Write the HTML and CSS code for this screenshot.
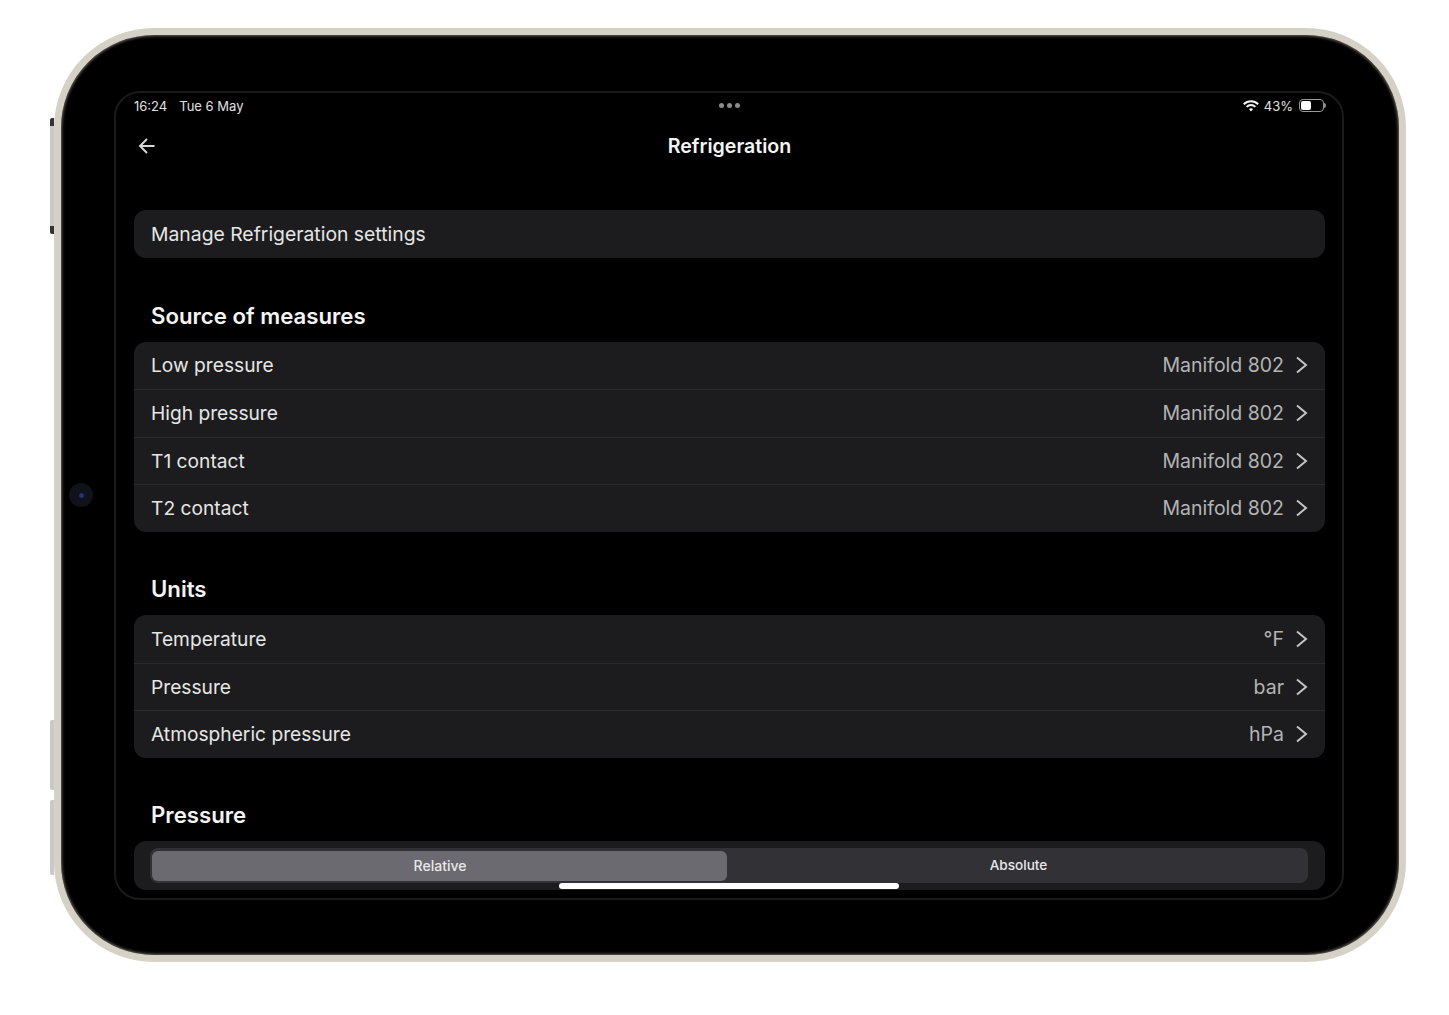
FILE: index.html
```html
<!DOCTYPE html>
<html>

<head>
    <title>Refrigeration</title>
    <meta charset="utf-8">
    <link rel="stylesheet" href="styles.css">
</head>

<body>
    <div class="device">
        <span class="side-btn side-top"></span>
        <span class="side-btn side-mid"></span>
        <span class="side-btn side-low"></span>
        <span class="camera"><i></i></span>

        <div class="screen">
            <div class="status">
                <div class="status-left"><span>16:24</span><span>Tue 6 May</span></div>
                <div class="dots"><i></i><i></i><i></i></div>
                <div class="status-right">
                    <svg class="wifi" width="16" height="12" viewBox="0 0 16 12">
                        <path d="M.8 4.2a10.2 10.2 0 0 1 14.4 0" fill="none" stroke="#f4f4f4" stroke-width="2"/>
                        <path d="M3.6 6.9a6.2 6.2 0 0 1 8.8 0" fill="none" stroke="#f4f4f4" stroke-width="2"/>
                        <path d="M5.9 9.2a3 3 0 0 1 4.2 0L8 11.6z" fill="#f4f4f4"/>
                    </svg>
                    <span>43%</span>
                    <span class="battery"><i></i></span>
                </div>
            </div>

            <div class="nav">
                <svg class="back" width="18" height="18" viewBox="0 0 18 18">
                    <path d="M16.5 9H2M9 2 2 9l7 7" fill="none" stroke="#d8d8d8" stroke-width="1.9"/>
                </svg>
                <h1>Refrigeration</h1>
            </div>

            <div class="card first">
                <div class="row">Manage Refrigeration settings</div>
            </div>

            <h2>Source of measures</h2>
            <div class="card">
                <div class="row"><span>Low pressure</span><span class="value">Manifold 802</span>
                    <svg class="chev" width="12" height="18" viewBox="0 0 12 18"><path d="M1 1.5 10 9l-9 7.5" /></svg></div>
                <div class="row"><span>High pressure</span><span class="value">Manifold 802</span>
                    <svg class="chev" width="12" height="18" viewBox="0 0 12 18"><path d="M1 1.5 10 9l-9 7.5" /></svg></div>
                <div class="row"><span>T1 contact</span><span class="value">Manifold 802</span>
                    <svg class="chev" width="12" height="18" viewBox="0 0 12 18"><path d="M1 1.5 10 9l-9 7.5" /></svg></div>
                <div class="row"><span>T2 contact</span><span class="value">Manifold 802</span>
                    <svg class="chev" width="12" height="18" viewBox="0 0 12 18"><path d="M1 1.5 10 9l-9 7.5" /></svg></div>
            </div>

            <h2>Units</h2>
            <div class="card">
                <div class="row"><span>Temperature</span><span class="value">°F</span>
                    <svg class="chev" width="12" height="18" viewBox="0 0 12 18"><path d="M1 1.5 10 9l-9 7.5" /></svg></div>
                <div class="row"><span>Pressure</span><span class="value">bar</span>
                    <svg class="chev" width="12" height="18" viewBox="0 0 12 18"><path d="M1 1.5 10 9l-9 7.5" /></svg></div>
                <div class="row"><span>Atmospheric pressure</span><span class="value">hPa</span>
                    <svg class="chev" width="12" height="18" viewBox="0 0 12 18"><path d="M1 1.5 10 9l-9 7.5" /></svg></div>
            </div>

            <h2>Pressure</h2>
            <div class="card seg-card">
                <div class="seg">
                    <div class="seg-item on">Relative</div>
                    <div class="seg-item off">Absolute</div>
                </div>
            </div>

            <div class="home-bar"></div>
        </div>
    </div>
</body>

</html>
```

FILE: styles.css
```css
* {
    box-sizing: border-box;
}

body {
    margin: 0;
    background: #fff;
    font-family: Inter, "Liberation Sans", sans-serif;
    color: #e6e6e6;
    height: 1015px;
    overflow: hidden;
}

/* device shell */

.device {
    position: relative;
    width: 1352px;
    height: 934px;
    margin: 28px 0 0 54px;
    padding: 56px 55px 55px 53px;
    background: #000;
    border: 7px solid #d6d1c6;
    border-radius: 100px;
    box-shadow: inset 0 0 3px 1px #6b675d;
}

.side-btn {
    position: absolute;
    left: -11px;
    width: 4px;
    background: #c9c9c6;
    border-radius: 2px 0 0 2px;
}

.side-top {
    top: 83px;
    height: 116px;
    border-top: 8px solid #333;
    border-bottom: 8px solid #333;
}

.side-mid {
    top: 685px;
    height: 70px;
}

.side-low {
    top: 765px;
    height: 75px;
}

.camera {
    position: absolute;
    left: 8px;
    top: 448px;
    width: 24px;
    height: 24px;
    border-radius: 50%;
    background: #10121a;
    display: flex;
    align-items: center;
    justify-content: center;
}

.camera i {
    width: 5px;
    height: 5px;
    border-radius: 50%;
    background: #27306e;
}

/* screen */

.screen {
    position: relative;
    height: 809px;
    padding: 0 17px 0 18px;
    border: 2px solid #1a1a1c;
    border-radius: 26px;
    background: #000;
    overflow: hidden;
}

.status {
    height: 25px;
    display: flex;
    align-items: center;
    justify-content: space-between;
    font-size: 13px;
    color: #e0e0e0;
}

.status-left {
    display: flex;
    gap: 12px;
    width: 200px;
}

.dots {
    display: flex;
    gap: 3px;
}

.dots i {
    width: 5px;
    height: 5px;
    border-radius: 50%;
    background: #8c8c8c;
}

.status-right {
    display: flex;
    align-items: center;
    justify-content: flex-end;
    gap: 6px;
    width: 200px;
}

.wifi {
    margin-right: -1px;
}

.battery {
    position: relative;
    width: 25px;
    height: 13px;
    border: 1px solid #9a9a9a;
    border-radius: 4px;
    padding: 1px;
    margin-right: 1px;
}

/* battery cap */
.battery::after {
    content: "";
    position: absolute;
    right: -3px;
    top: 3px;
    width: 2px;
    height: 5px;
    background: #8a8a8a;
    border-radius: 0 2px 2px 0;
}

.battery i {
    display: block;
    width: 10px;
    height: 9px;
    background: #fff;
    border-radius: 2px;
}

.nav {
    position: relative;
    height: 56px;
    display: flex;
    align-items: center;
    justify-content: center;
}

.nav h1 {
    margin: 0;
    font-size: 19.6px;
    font-weight: 600;
    color: #f4f4f4;
}

.back {
    position: absolute;
    left: 4px;
    top: 19px;
}

/* list cards */

.card {
    background: #1c1c1e;
    border-radius: 12px;
}

.card.first {
    margin-top: 36px;
}

h2 {
    margin: 0;
    height: 83.5px;
    padding: 43.5px 0 0 17px;
    font-size: 22.2px;
    line-height: 28px;
    font-weight: 600;
    color: #f4f4f4;
}

.row {
    display: flex;
    align-items: center;
    height: 47.5px;
    padding: 0 17px 0 17px;
    font-size: 19.2px;
    border-top: 1px solid #2a2a2c;
}

.card.first .row {
    height: 48px;
    font-size: 19.35px;
}

.row:first-child {
    border-top: 0;
}

.value {
    margin-left: auto;
    margin-right: 12px;
    font-size: 19.5px;
    color: #b4b4b6;
}

.chev {
    fill: none;
    stroke: #c4c4c6;
    stroke-width: 2;
}

/* segmented control */

.seg-card {
    height: 49px;
    padding: 7px 17px 7px 16px;
}

.seg {
    display: flex;
    height: 35px;
    padding: 3px 2px 2px;
    background: #323236;
    border-radius: 8px;
}

.seg-item {
    flex: 1;
    display: flex;
    align-items: center;
    justify-content: center;
    padding-bottom: 2px;
    font-size: 14px;
    font-weight: 500;
    color: #e8e8e8;
}

.seg-item.on {
    flex: none;
    width: 575px;
    padding-left: 1px;
    background: #6b6a70;
    border-radius: 6px;
}

.seg-item.off {
    padding-left: 4px;
    font-size: 13.6px;
}

.home-bar {
    position: absolute;
    left: 443px;
    bottom: 9px;
    width: 340px;
    height: 6px;
    background: #fff;
    border-radius: 3px;
}
```
